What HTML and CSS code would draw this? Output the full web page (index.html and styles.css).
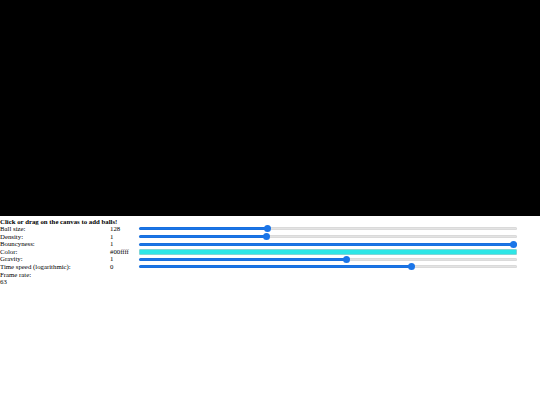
FILE: index.html
```html
<!DOCTYPE html>
<html lang="en">
<head>
    <meta charset="UTF-8">
    <title>Balls</title>
    <link rel="stylesheet" href="styles.css">
</head>
<body>
    <canvas class="stage" width="540" height="216"></canvas>

    <div class="controls">
        <div class="hint">Click or drag on the canvas to add balls!</div>

        <div class="row">
            <span>Ball size:</span>
            <span>128</span>
            <input class="slider" type="range" min="0" max="381" value="128" style="--p: 33.6%">
        </div>
        <div class="row">
            <span>Density:</span>
            <span>1</span>
            <input class="slider" type="range" min="0" max="3" step="0.01" value="1" style="--p: 33.3%">
        </div>
        <div class="row">
            <span>Bouncyness:</span>
            <span>1</span>
            <input class="slider" type="range" min="0" max="1" step="0.01" value="1" style="--p: 100%">
        </div>
        <div class="row">
            <span>Color:</span>
            <span>#00ffff</span>
            <div class="swatch"></div>
        </div>
        <div class="row">
            <span>Gravity:</span>
            <span>1</span>
            <input class="slider" type="range" min="-1.2" max="2.8" step="0.01" value="1" style="--p: 55%">
        </div>
        <div class="row">
            <span>Time speed (logarithmic):</span>
            <span>0</span>
            <input class="slider" type="range" min="-2.65" max="1" step="0.01" value="0" style="--p: 72.6%">
        </div>

        <div>Frame rate:</div>
        <div>63</div>
    </div>
</body>
</html>
```

FILE: styles.css
```css
body {
    margin: 0;
    font-family: "Liberation Serif", serif;
    font-size: 6.8px;
    line-height: 7.6px;
    color: #000;
    background: #fff;
}

.stage {
    display: block;
    width: 540px;
    height: 216px;
    background: #000;
}

.controls {
    padding-top: 1.5px;
}

.hint {
    font-weight: bold;
}

.row {
    display: grid;
    grid-template-columns: 110px 29px 378px;
    align-items: center;
    height: 7.6px;
}

.slider {
    -webkit-appearance: none;
    appearance: none;
    margin: 0;
    width: 100%;
    height: 7px;
    background: transparent;
}

.slider::-webkit-slider-runnable-track {
    height: 3px;
    border-radius: 2px;
    background: linear-gradient(to right, #1a75e8 var(--p), #e3e3e3 var(--p));
    box-shadow: inset 0 0 0 0.5px rgba(0, 0, 0, 0.08);
}

.slider::-webkit-slider-thumb {
    -webkit-appearance: none;
    width: 7px;
    height: 7px;
    margin-top: -2px;
    border-radius: 50%;
    background: #1a75e8;
    border: none;
}

.swatch {
    height: 4px;
    width: 376px;
    background: #2ee6e6;
    border: 0.5px solid #7fd6d6;
    border-radius: 1px;
}
```
